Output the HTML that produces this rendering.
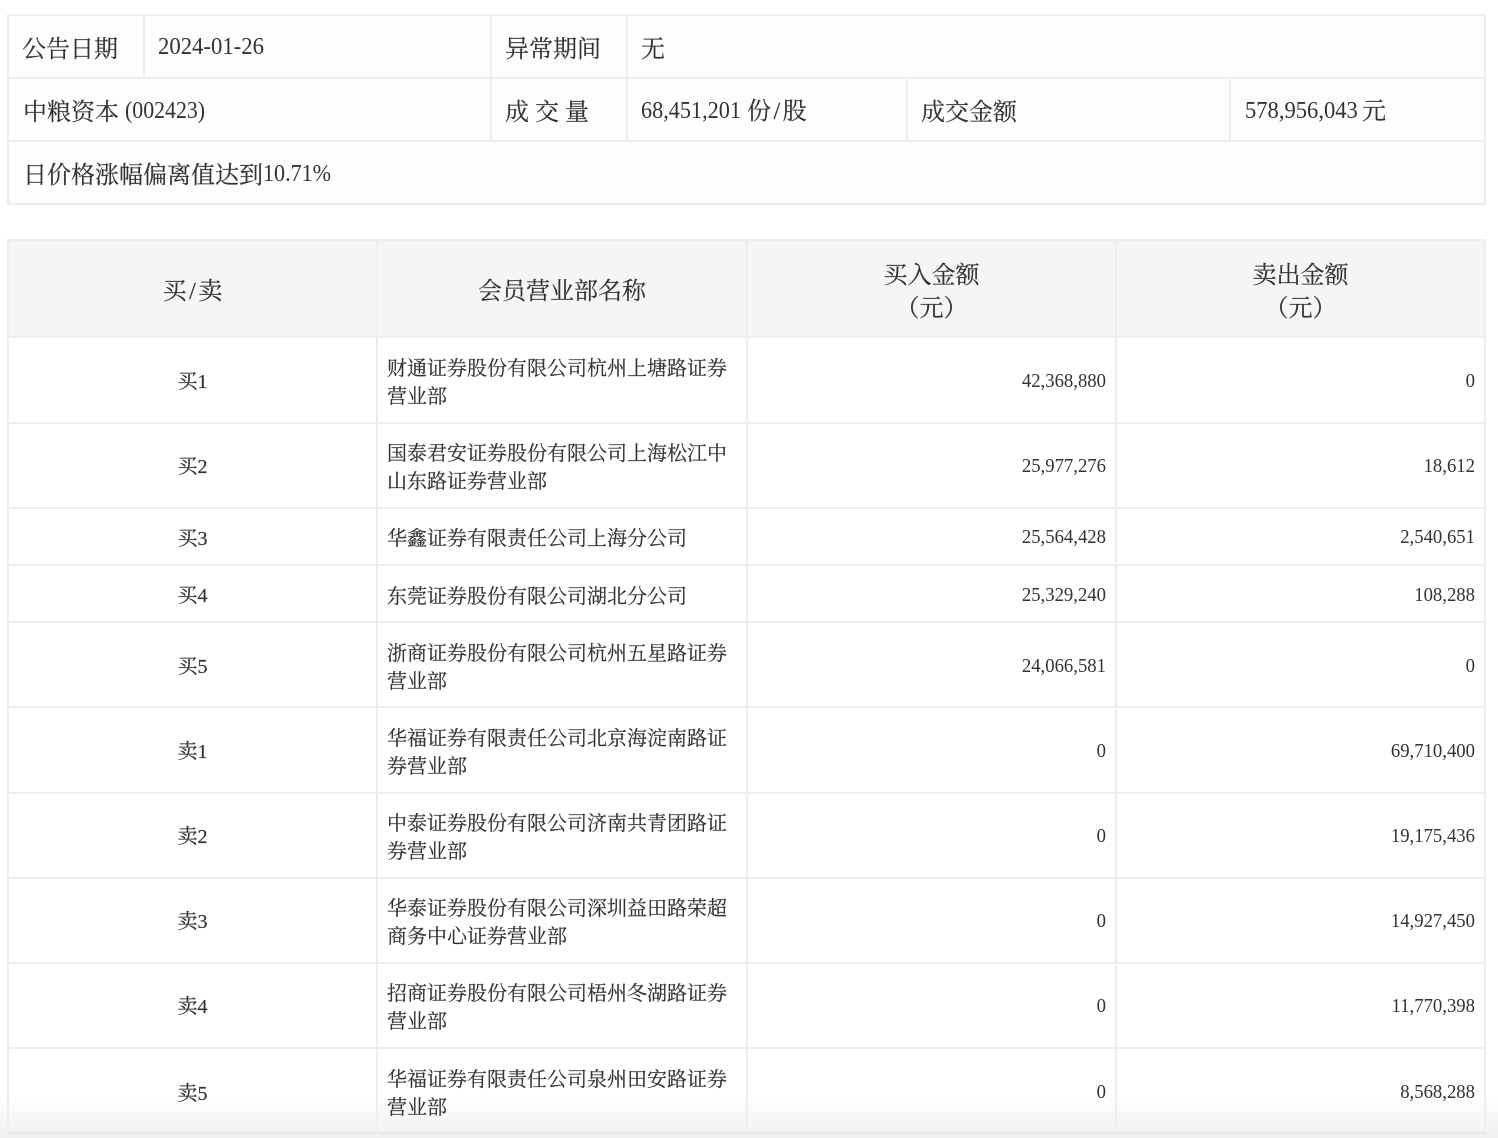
<!DOCTYPE html>
<html lang="zh"><head><meta charset="utf-8"><style>
html,body{margin:0;padding:0;background:#fff}
#p{position:relative;width:1498px;height:1138px;overflow:hidden;background:#fff;font-family:"Liberation Serif","Noto Serif CJK SC",serif;color:#333;-webkit-text-stroke:.2px #333}
#p div{position:absolute;white-space:nowrap}
.l{background:#eeeeee}
.a{font-size:24px;line-height:32px}
.n{font-size:20px;line-height:28px;transform:scaleX(.935);transform-origin:100% 50%;-webkit-text-stroke:0}
.b{font-size:20px;line-height:28px}
.c{text-align:center}
.m{left:387px}
.c1{left:9px;width:367px;text-align:center}
.c3{left:748px;width:358px;text-align:right}
.c4{left:1117px;width:358px;text-align:right}
.h{left:9px;width:1475px;height:96px;top:241px;background:#f5f5f5}
.x{font-size:24px;line-height:32px;transform-origin:0 50%;-webkit-text-stroke:0}
.s{padding:0 2.5px}
</style></head><body><div id="p">
<div style="left:7px;top:14px;width:1479px;height:191px;background:#fdfdfb"></div>
<div class="h"></div>
<div style="left:0;top:1095px;width:1498px;height:43px;background:linear-gradient(rgba(240,240,240,0),rgb(240,240,240))"></div>

<div class="l" style="left:7px;top:14px;width:1479px;height:2px"></div>
<div class="l" style="left:7px;top:77px;width:1479px;height:2px"></div>
<div class="l" style="left:7px;top:140px;width:1479px;height:2px"></div>
<div class="l" style="left:7px;top:203px;width:1479px;height:2px"></div>
<div class="l" style="left:7px;top:14px;width:2px;height:191px"></div>
<div class="l" style="left:1484px;top:14px;width:2px;height:191px"></div>
<div class="l" style="left:143px;top:14px;width:2px;height:64px"></div>
<div class="l" style="left:490px;top:14px;width:2px;height:128px"></div>
<div class="l" style="left:626px;top:14px;width:2px;height:128px"></div>
<div class="l" style="left:906px;top:78px;width:2px;height:64px"></div>
<div class="l" style="left:1229px;top:78px;width:2px;height:64px"></div>

<div class="a" style="left:22px;top:34px">公告日期</div>
<div class="x" style="left:158px;top:31px;transform:scaleX(.946)">2024-01-26</div>
<div class="a" style="left:505px;top:34px">异常期间</div>
<div class="a" style="left:641px;top:34px">无</div>
<div class="a" style="left:23px;top:97px">中粮资本</div>
<div class="x" style="left:125px;top:95px;transform:scaleX(.91)">(002423)</div>
<div class="a" style="left:505px;top:97px">成 交 量</div>
<div class="x" style="left:641px;top:95px;transform:scaleX(.926)">68,451,201</div>
<div class="a" style="left:747px;top:96px">份<span class="s">/</span>股</div>
<div class="a" style="left:921px;top:97px">成交金额</div>
<div class="x" style="left:1245px;top:95px;transform:scaleX(.94)">578,956,043</div>
<div class="a" style="left:1362px;top:96px">元</div>
<div class="a" style="left:23px;top:160px">日价格涨幅偏离值达到</div>
<div class="x" style="left:263px;top:158px;transform:scaleX(.92)">10.71%</div>

<div class="l" style="left:7px;top:239px;width:1479px;height:2px"></div>
<div class="l" style="left:7px;top:336px;width:1479px;height:2px"></div>
<div class="l" style="left:7px;top:422px;width:1479px;height:2px"></div>
<div class="l" style="left:7px;top:507px;width:1479px;height:2px"></div>
<div class="l" style="left:7px;top:564px;width:1479px;height:2px"></div>
<div class="l" style="left:7px;top:621px;width:1479px;height:2px"></div>
<div class="l" style="left:7px;top:706px;width:1479px;height:2px"></div>
<div class="l" style="left:7px;top:792px;width:1479px;height:2px"></div>
<div class="l" style="left:7px;top:877px;width:1479px;height:2px"></div>
<div class="l" style="left:7px;top:962px;width:1479px;height:2px"></div>
<div class="l" style="left:7px;top:1047px;width:1479px;height:2px"></div>
<div class="l" style="left:7px;top:1132px;width:1479px;height:2px;background:#e8e8e8"></div>
<div class="l" style="left:7px;top:239px;width:2px;height:895px"></div>
<div class="l" style="left:376px;top:239px;width:2px;height:895px"></div>
<div class="l" style="left:746px;top:239px;width:2px;height:895px"></div>
<div class="l" style="left:1115px;top:239px;width:2px;height:895px"></div>
<div class="l" style="left:1484px;top:239px;width:2px;height:895px"></div>

<div class="a c" style="left:9px;width:367px;top:276px">买<span class="s">/</span>卖</div>
<div class="a c" style="left:378px;width:368px;top:276px">会员营业部名称</div>
<div class="a c" style="left:748px;width:367px;top:260px">买入金额</div>
<div class="a c" style="left:748px;width:367px;top:293px">（元）</div>
<div class="a c" style="left:1117px;width:367px;top:260px">卖出金额</div>
<div class="a c" style="left:1117px;width:367px;top:293px">（元）</div>

<div class="b c1" style="top:368px">买1</div>
<div class="b m" style="top:355px">财通证券股份有限公司杭州上塘路证券<br>营业部</div>
<div class="n c3" style="top:367px">42,368,880</div><div class="n c4" style="top:367px">0</div>

<div class="b c1" style="top:453px">买2</div>
<div class="b m" style="top:440px">国泰君安证券股份有限公司上海松江中<br>山东路证券营业部</div>
<div class="n c3" style="top:452px">25,977,276</div><div class="n c4" style="top:452px">18,612</div>

<div class="b c1" style="top:525px">买3</div>
<div class="b m" style="top:525px">华鑫证券有限责任公司上海分公司</div>
<div class="n c3" style="top:523px">25,564,428</div><div class="n c4" style="top:523px">2,540,651</div>

<div class="b c1" style="top:582px">买4</div>
<div class="b m" style="top:583px">东莞证券股份有限公司湖北分公司</div>
<div class="n c3" style="top:581px">25,329,240</div><div class="n c4" style="top:581px">108,288</div>

<div class="b c1" style="top:653px">买5</div>
<div class="b m" style="top:640px">浙商证券股份有限公司杭州五星路证券<br>营业部</div>
<div class="n c3" style="top:652px">24,066,581</div><div class="n c4" style="top:652px">0</div>

<div class="b c1" style="top:738px">卖1</div>
<div class="b m" style="top:725px">华福证券有限责任公司北京海淀南路证<br>券营业部</div>
<div class="n c3" style="top:737px">0</div><div class="n c4" style="top:737px">69,710,400</div>

<div class="b c1" style="top:823px">卖2</div>
<div class="b m" style="top:810px">中泰证券股份有限公司济南共青团路证<br>券营业部</div>
<div class="n c3" style="top:822px">0</div><div class="n c4" style="top:822px">19,175,436</div>

<div class="b c1" style="top:908px">卖3</div>
<div class="b m" style="top:895px">华泰证券股份有限公司深圳益田路荣超<br>商务中心证券营业部</div>
<div class="n c3" style="top:907px">0</div><div class="n c4" style="top:907px">14,927,450</div>

<div class="b c1" style="top:993px">卖4</div>
<div class="b m" style="top:980px">招商证券股份有限公司梧州冬湖路证券<br>营业部</div>
<div class="n c3" style="top:992px">0</div><div class="n c4" style="top:992px">11,770,398</div>

<div class="b c1" style="top:1080px">卖5</div>
<div class="b m" style="top:1066px">华福证券有限责任公司泉州田安路证券<br>营业部</div>
<div class="n c3" style="top:1078px">0</div><div class="n c4" style="top:1078px">8,568,288</div>
</div></body></html>
